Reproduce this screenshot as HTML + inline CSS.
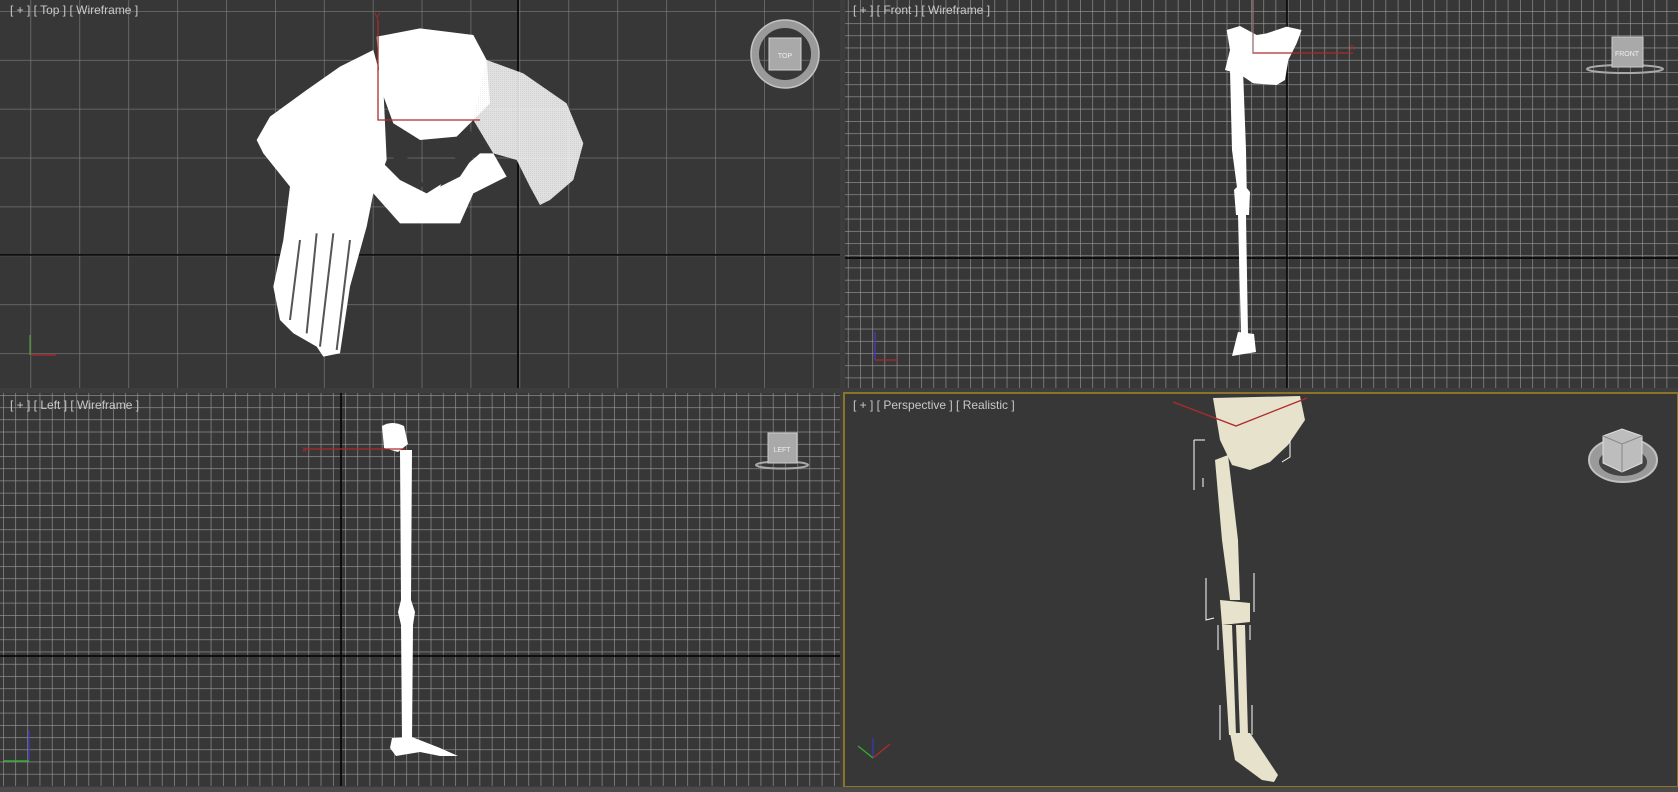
<!DOCTYPE html>
<html><head><meta charset="utf-8"><style>
html,body{margin:0;padding:0;background:#3d3d3d;width:1678px;height:792px;overflow:hidden}
svg{display:block}
text{font-family:"Liberation Sans",sans-serif}
</style></head><body>
<svg width="1678" height="792" viewBox="0 0 1678 792" xmlns="http://www.w3.org/2000/svg">
<defs>
<pattern id="big" x="30.5" y="11" width="48.9" height="48.9" patternUnits="userSpaceOnUse">
<path d="M0 0V48.9M0 0H48.9" stroke="#7c7c7c" stroke-width="1.3" fill="none"/></pattern>
<pattern id="fine" x="4.7" y="11" width="12.22" height="12.22" patternUnits="userSpaceOnUse">
<path d="M0 0V12.22M0 0H12.22" stroke="#9c9c9c" stroke-width="1.2" fill="none"/></pattern>
<pattern id="fine2" x="3" y="4" width="12.22" height="12.22" patternUnits="userSpaceOnUse">
<path d="M0 0V12.22M0 0H12.22" stroke="#9c9c9c" stroke-width="1.2" fill="none"/></pattern>
<pattern id="mesh" width="6" height="6" patternUnits="userSpaceOnUse">
<rect width="6" height="6" fill="#fff"/><rect x="2" y="3" width="1" height="1" fill="#444"/></pattern>
</defs>

<!-- Top viewport -->
<rect x="0" y="0" width="840" height="388" fill="#373737"/>
<rect x="0" y="0" width="840" height="388" fill="url(#big)"/>
<line x1="518" y1="0" x2="518" y2="388" stroke="#000" stroke-width="1.5"/>
<line x1="0" y1="255" x2="840" y2="255" stroke="#000" stroke-width="1.5"/>
<g transform="translate(240,20) scale(0.3333)" fill="#fff">
<path d="M50 360L90 290L200 210L300 140L400 90L430 200L440 420L400 520L380 620L330 800L300 1000L250 1010L230 980L160 940L120 900L100 800L130 660L150 500L70 400Z"/>
<path d="M410 50L540 25L700 45L740 120L750 250L650 350L540 360L460 310L420 200Z"/>
<path d="M740 120L850 160L980 250L1030 370L1000 480L930 540L900 555L870 500L830 420L760 400L700 300Z" fill="url(#mesh)" opacity="0.85"/>
<path d="M420 420L480 480L560 520L640 470L720 400L760 400L800 470L700 520L660 610L480 610L400 520Z"/>
<path d="M540 360L460 310L480 350L540 365Z" fill="#373737"/>
<path d="M480 470L520 480L560 510L470 360L460 420Z" fill="#373737"/>
<path d="M600 500L660 470L720 380L690 330Z" fill="#373737"/>
<path d="M180 660L150 900M230 640L200 940M280 640L240 980M330 660L290 990" stroke="#555" stroke-width="6" fill="none"/>
</g>
<path d="M378 20V120H480" stroke="#b02a2a" stroke-width="1.3" fill="none"/>
<text x="374" y="20" fill="#b02a2a" font-size="10">Y</text>
<circle cx="785" cy="54" r="30" fill="none" stroke="#9a9a9a" stroke-width="8"/>
<circle cx="785" cy="54" r="34" fill="none" stroke="#c4c4c4" stroke-width="1.5"/>
<rect x="769" y="38" width="32" height="32" fill="#a9a9a9" stroke="#d0d0d0"/>
<text x="785" y="58" fill="#eee" font-size="7" text-anchor="middle">TOP</text>
<text x="10" y="14" fill="#c8c8c8" font-size="12">[ + ] [ Top ] [ Wireframe ]</text>
<path d="M30 355V335M30 355H56" stroke="#b02a2a" stroke-width="1.3"/><path d="M30 355V335" stroke="#3c9a3c" stroke-width="1.3"/>

<!-- Front viewport -->
<rect x="845" y="0" width="833" height="388" fill="#373737"/>
<rect x="845" y="0" width="833" height="388" fill="url(#fine)"/>
<line x1="1287" y1="0" x2="1287" y2="388" stroke="#000" stroke-width="1.5"/>
<line x1="845" y1="258" x2="1678" y2="258" stroke="#000" stroke-width="1.5"/>
<g transform="translate(1200,0) scale(0.3333)" fill="#fff">
<path d="M80 90L120 78L170 105L200 100L260 80L305 90L290 130L265 180L255 240L230 255L160 250L130 230L110 220L75 210L90 150Z"/>
</g>
<path d="M1230 70L1243 70L1246 150L1247 205L1240 210L1232 150Z" fill="#fff"/>
<path d="M1234 190Q1242 180 1250 192L1249 215L1236 215Z" fill="#fff"/>
<path d="M1238 215L1246 215L1248 335L1241 335Z" fill="#fff"/>
<path d="M1238 332L1254 334L1256 352L1232 356Z" fill="#fff"/>
<path d="M1253 0V53H1353" stroke="#b02a2a" stroke-width="1.3" fill="none"/>
<line x1="1253" y1="0" x2="1253" y2="53" stroke="#888"/>
<text x="1350" y="50" fill="#b02a2a" font-size="9">x</text>
<ellipse cx="1625" cy="69" rx="38" ry="4" fill="none" stroke="#aaa" stroke-width="2"/>
<rect x="1612" y="37" width="31" height="30" fill="#a9a9a9" stroke="#ccc"/>
<text x="1627" y="56" fill="#eee" font-size="7" text-anchor="middle">FRONT</text>
<text x="853" y="14" fill="#c8c8c8" font-size="12">[ + ] [ Front ] [ Wireframe ]</text>
<path d="M875 360V332M875 360H898" stroke="#b02a2a" stroke-width="1.3"/><path d="M875 360V332" stroke="#3a3ab8" stroke-width="1.3"/>

<!-- Left viewport -->
<rect x="0" y="393" width="840" height="393" fill="#373737"/>
<rect x="0" y="393" width="840" height="393" fill="url(#fine2)"/>
<line x1="341" y1="393" x2="341" y2="786" stroke="#000" stroke-width="1.5"/>
<line x1="0" y1="656" x2="840" y2="656" stroke="#000" stroke-width="1.5"/>
<path d="M382 426Q392 420 404 426L408 444L398 452L384 448Z" fill="#fff"/>
<path d="M400 450L412 450L411 600L415 612L413 625L412 740L402 740L401 625L398 612L401 600Z" fill="#fff"/>
<path d="M392 738L412 737L440 748L458 756L440 756L420 752L396 756L390 748Z" fill="#fff"/>
<path d="M305 449H405" stroke="#b02a2a" stroke-width="1.3"/>
<text x="302" y="452" fill="#b02a2a" font-size="9">x</text>
<ellipse cx="782" cy="465" rx="26" ry="3.5" fill="none" stroke="#aaa" stroke-width="2"/>
<rect x="768" y="433" width="29" height="30" fill="#a9a9a9" stroke="#ccc"/>
<text x="782" y="452" fill="#eee" font-size="7" text-anchor="middle">LEFT</text>
<text x="10" y="409" fill="#c8c8c8" font-size="12">[ + ] [ Left ] [ Wireframe ]</text>
<path d="M29 761V730" stroke="#3a3ab8" stroke-width="1.3"/><path d="M4 761H29" stroke="#2fb02f" stroke-width="1.5"/>

<!-- Perspective viewport -->
<rect x="844" y="393" width="834" height="394" fill="#373737" stroke="#8a7428" stroke-width="2"/>
<g fill="#e6e2cc">
<path d="M1213 398L1300 396L1305 420L1288 445L1270 462L1250 470L1232 465L1220 440Z"/>
<path d="M1215 460L1228 455L1238 540L1240 600L1230 600L1222 540Z"/>
<path d="M1220 600L1250 603L1250 622L1222 625Z"/>
<path d="M1222 625L1232 625L1236 735L1229 735Z"/>
<path d="M1236 625L1245 625L1248 735L1240 735Z"/>
<path d="M1230 733L1250 733L1278 775L1274 782L1262 780L1235 760Z"/>
</g>
<path d="M1173 402L1236 426L1307 398" stroke="#b02a2a" stroke-width="1.3" fill="none"/>
<g stroke="#fff" fill="none" stroke-width="1">
<path d="M1194 440H1205M1194 440V490M1203 478V487M1290 440V457L1282 462"/>
<path d="M1206 578V620L1214 618M1254 573V612M1218 625V650M1250 625V640"/>
<path d="M1220 705V740M1252 705V735"/>
</g>
<ellipse cx="1623" cy="460" rx="34" ry="22" fill="#9a9a9a" stroke="#c0c0c0" stroke-width="2"/>
<ellipse cx="1623" cy="462" rx="24" ry="14" fill="#444"/>
<path d="M1603 436L1622 429L1642 436L1642 463L1622 472L1603 463Z" fill="#bdbdbd" stroke="#ddd"/>
<path d="M1603 436L1622 444L1642 436M1622 444V472" stroke="#888" fill="none"/>
<text x="853" y="409" fill="#c8c8c8" font-size="12">[ + ] [ Perspective ] [ Realistic ]</text>
<path d="M873 758V738" stroke="#3a3ab8" stroke-width="1.3"/>
<path d="M873 758L858 746" stroke="#2fb02f" stroke-width="1.3"/><path d="M873 758L890 744" stroke="#b02a2a" stroke-width="1.3"/>

<rect x="0" y="787" width="1678" height="5" fill="#4a4a4a"/>
</svg>
</body></html>
